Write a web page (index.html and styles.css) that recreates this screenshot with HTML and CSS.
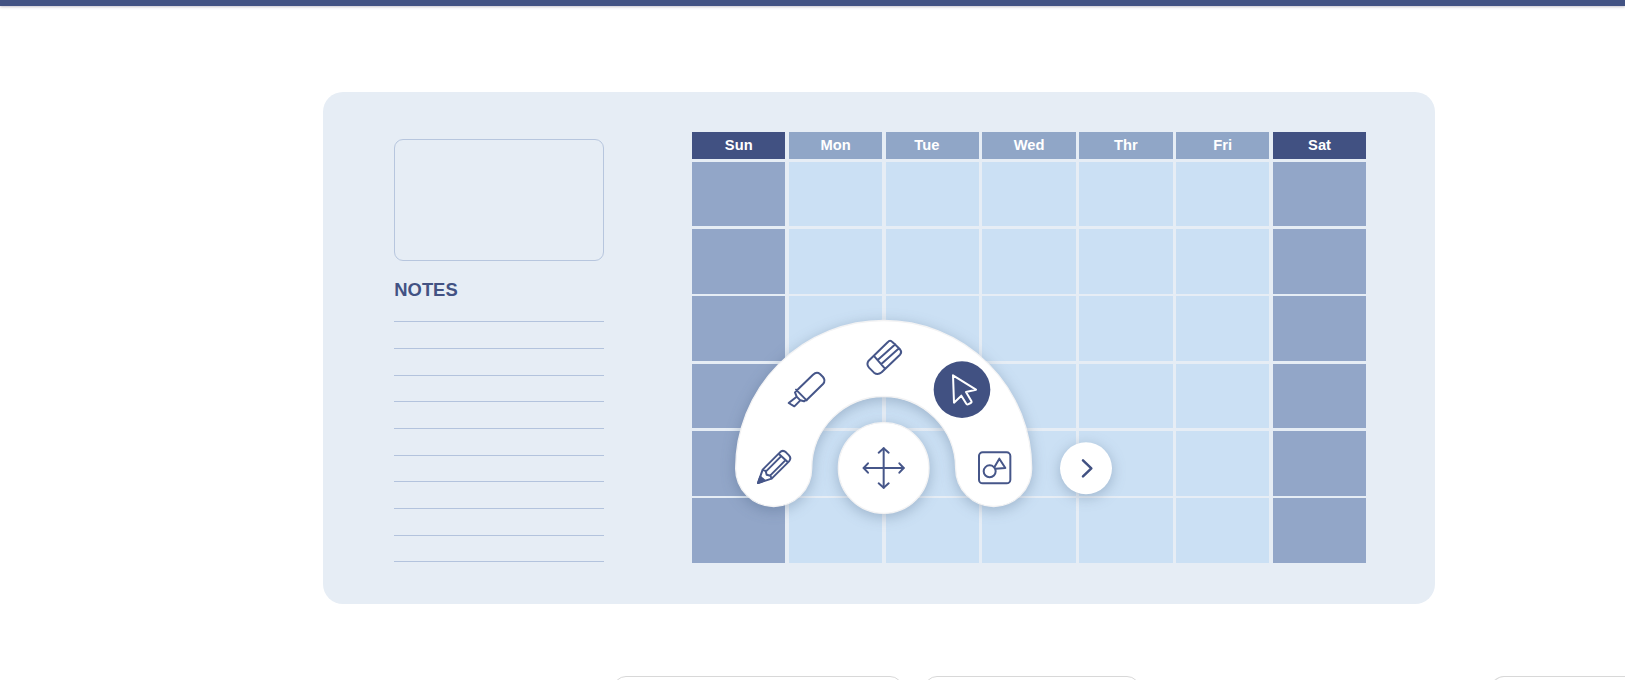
FILE: index.html
```html
<!DOCTYPE html>
<html lang="en">
<head>
<meta charset="utf-8">
<title>Planner</title>
<link rel="stylesheet" href="styles.css">
</head>
<body>
<header class="topbar"></header>
<main class="stage">
  <section class="board">
    <aside class="notes">
      <div class="photo"></div>
      <h2 class="notes-title">NOTES</h2>
      <div class="lines"><i></i><i></i><i></i><i></i><i></i><i></i><i></i><i></i><i></i><i></i></div>
    </aside>
    <div class="calendar">
      <div class="day end">Sun</div><div class="day">Mon</div><div class="day tue">Tue</div><div class="day">Wed</div><div class="day">Thr</div><div class="day">Fri</div><div class="day end">Sat</div>
      <b class="off"></b><b></b><b></b><b></b><b></b><b></b><b class="off"></b>
      <b class="off"></b><b></b><b></b><b></b><b></b><b></b><b class="off"></b>
      <b class="off"></b><b></b><b></b><b></b><b></b><b></b><b class="off"></b>
      <b class="off"></b><b></b><b></b><b></b><b></b><b></b><b class="off"></b>
      <b class="off"></b><b></b><b></b><b></b><b></b><b></b><b class="off"></b>
      <b class="off"></b><b></b><b></b><b></b><b></b><b></b><b class="off"></b>
    </div>
    <svg class="tools" viewBox="0 0 1230 630">
      <!-- arc-shaped tool menu -->
      <path class="surface" d="M47 475.500A444 444 0 0 1 935 475.500A114 114 0 0 1 707 475.500A216 216 0 0 0 275 475.500A114 114 0 0 1 47 475.500Z"/>
      <circle class="surface" cx="491" cy="474" r="136"/>
      <circle class="surface next" cx="1098" cy="475" r="78"/>
      <circle class="active" cx="726" cy="239" r="85"/>
      <g class="icon">
        <!-- pencil -->
        <path d="M114 519L128 479L179 428Q188 418 198 427L207 436Q215 445 207 454L155 506ZM128 479L137 483L140 494L151 497L155 506M138 484L183 439M151 496L196 451M176 431L204 457"/>
        <path class="fill" d="M114 519L121 500L133 511Z"/>
        <!-- highlighter -->
        <path d="M234 238L279 194Q290 184 300 192L309 201Q318 212 309 222L260 270M228 239L260 271M234 238L225 247L230 260L241 271L252 274L258 270M230 260L206 279L223 289L241 271"/>
        <!-- eraser -->
        <path d="M446 152L503 97Q510 88 518 97L540 118Q547 126 540 134L485 187Q473 197 462 188L447 173Q438 163 446 152ZM463 139L495 176M473 150L526 103M484 162L537 115"/>
        <!-- move -->
        <path d="M491 415V533M431 474H551"/>
        <path d="M476 428L491 415L506 428M476 520L491 533L506 520M444 460L431 474L444 488M538 460L551 474L538 488"/>
        <!-- shapes -->
        <rect x="777" y="427" width="94" height="93" rx="11"/>
        <circle cx="809" cy="484" r="18"/>
        <path d="M823 472L838 446L856 474L826 476"/>
        <path class="chevron" d="M1089 451L1114 475L1089 499"/>
      </g>
      <path class="cursor" d="M699 196L768 239L738 246L754 273Q756 277 752 279L744 283Q740 284 738 280L724 257L702 278Z"/>
    </svg>
  </section>
</main>
<footer class="cards"><div class="card one"></div><div class="card two"></div><div class="card three"></div></footer>
</body>
</html>
```
FILE: styles.css
```css
* { box-sizing: border-box; }
body { margin: 0; height: 680px; overflow: hidden; background: #fff; font-family: "Liberation Sans", Arial, sans-serif; }
.topbar { height: 6px; background: #425283; box-shadow: 0 1px 3px rgba(60,50,80,.3); }
.stage { padding: 86px 190px 0 323px; }
.board { position: relative; display: flex; width: 1112px; height: 512px; padding: 40.200px 68.700px 0 70.800px; border-radius: 20px; background: #e6edf5; }
.notes { width: 210.600px; margin-right: 87.600px; padding-top: 7.300px; }
.photo { height: 122px; border: 1px solid #b7c6de; border-radius: 9px; }
.notes-title { margin: 19px 0 0 .5px; font-size: 18.400px; line-height: 20px; color: #425283; }
.lines { display: flex; flex-direction: column; justify-content: space-between; height: 241px; margin-top: 21px; }
.lines i { height: 1px; background: #b3c3dd; }
.calendar { display: grid; grid-template: 27px repeat(6, 64.700px) / repeat(7, 1fr); gap: 2.600px 3.300px; width: 674.300px; height: 431px; }
.calendar b { background: #cbe0f4; }
.calendar .off { background: #92a6c8; }
.day { background: #90a6c7; color: #fff; font-size: 14.700px; font-weight: bold; line-height: 26px; text-align: center; }
.day.end { background: #415182; }
.day.tue { padding-right: 11px; }
.tools { position: absolute; left: 397px; top: 217.700px; width: 410px; height: 210px; overflow: visible; }
.surface { fill: #fff; stroke: #f3f3f4; stroke-width: 4; filter: drop-shadow(0 9px 20px rgba(50,75,110,.3)); }
.next { stroke: none; }
.active { fill: #415182; }
.icon { fill: none; stroke: #465689; stroke-width: 6; stroke-linecap: round; stroke-linejoin: round; }
.icon .fill { fill: #465689; }
.icon .chevron { stroke: #415182; stroke-width: 7.500; }
.cursor { fill: none; stroke: #fff; stroke-width: 6; stroke-linejoin: round; }
.cards { display: flex; height: 4px; margin-top: 72px; padding-left: 613px; overflow: hidden; }
.card { flex: none; height: 60px; border: 1px solid #d8d8d8; border-radius: 13px; }
.one { width: 290px; }
.two { width: 216px; margin-left: 21px; }
.three { flex: 1; margin-left: 351px; border-right: 0; border-top-right-radius: 0; }
```
